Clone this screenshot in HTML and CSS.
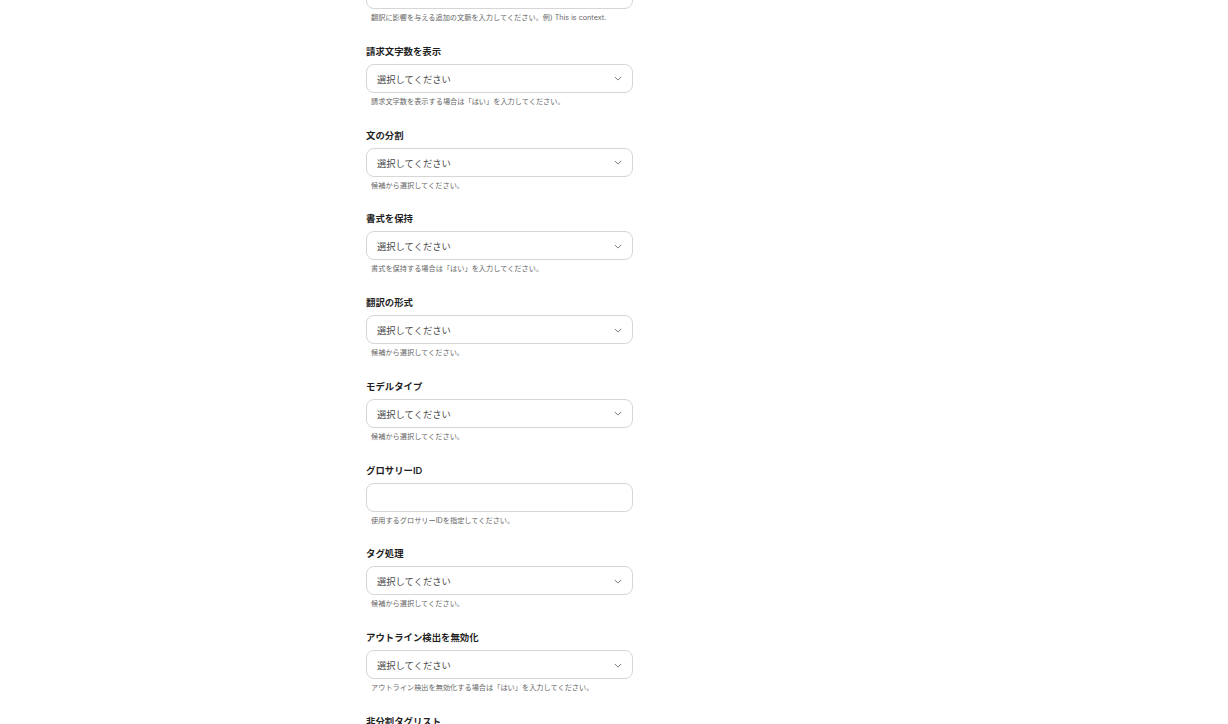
FILE: index.html
```html
<!DOCTYPE html>
<html lang="ja">
<head>
  <meta charset="UTF-8">
  <title>翻訳設定</title>
  <meta name="viewport" content="width=device-width, initial-scale=1.0">
  <link rel="stylesheet" href="styles.css">
</head>
<body>
  <form class="form">
    <div class="field">
      <label class="label">コンテキスト</label>
      <input class="input" type="text">
      <p class="help">翻訳に影響を与える追加の文脈を入力してください。例) This is context.</p>
    </div>

    <div class="field">
      <label class="label">請求文字数を表示</label>
      <div class="select"><span>選択してください</span><svg class="chev" viewBox="0 0 10 6"><path d="M1 1l4 4 4-4"/></svg></div>
      <p class="help">請求文字数を表示する場合は「はい」を入力してください。</p>
    </div>

    <div class="field">
      <label class="label">文の分割</label>
      <div class="select"><span>選択してください</span><svg class="chev" viewBox="0 0 10 6"><path d="M1 1l4 4 4-4"/></svg></div>
      <p class="help">候補から選択してください。</p>
    </div>

    <div class="field">
      <label class="label">書式を保持</label>
      <div class="select"><span>選択してください</span><svg class="chev" viewBox="0 0 10 6"><path d="M1 1l4 4 4-4"/></svg></div>
      <p class="help">書式を保持する場合は「はい」を入力してください。</p>
    </div>

    <div class="field">
      <label class="label">翻訳の形式</label>
      <div class="select"><span>選択してください</span><svg class="chev" viewBox="0 0 10 6"><path d="M1 1l4 4 4-4"/></svg></div>
      <p class="help">候補から選択してください。</p>
    </div>

    <div class="field">
      <label class="label">モデルタイプ</label>
      <div class="select"><span>選択してください</span><svg class="chev" viewBox="0 0 10 6"><path d="M1 1l4 4 4-4"/></svg></div>
      <p class="help">候補から選択してください。</p>
    </div>

    <div class="field">
      <label class="label">グロサリーID</label>
      <input class="input" type="text">
      <p class="help">使用するグロサリーIDを指定してください。</p>
    </div>

    <div class="field">
      <label class="label">タグ処理</label>
      <div class="select"><span>選択してください</span><svg class="chev" viewBox="0 0 10 6"><path d="M1 1l4 4 4-4"/></svg></div>
      <p class="help">候補から選択してください。</p>
    </div>

    <div class="field">
      <label class="label">アウトライン検出を無効化</label>
      <div class="select"><span>選択してください</span><svg class="chev" viewBox="0 0 10 6"><path d="M1 1l4 4 4-4"/></svg></div>
      <p class="help">アウトライン検出を無効化する場合は「はい」を入力してください。</p>
    </div>

    <div class="field">
      <label class="label">非分割タグリスト</label>
      <input class="input" type="text">
      <p class="help">分割しないタグをカンマ区切りで入力してください。</p>
    </div>
  </form>
</body>
</html>
```

FILE: styles.css
```css
body { margin: 0; background: #fff; font-family: Inter, "Noto Sans CJK JP", sans-serif; color: #1f1f1f; overflow: hidden; }
.form { width: 267px; margin: -39px 0 0 366px; }
.field { margin-bottom: 20.75px; }
.label { display: block; font-size: 9.4px; line-height: 14px; font-weight: 600; color: #1f1f1f; margin-bottom: 5px; }
.input, .select { box-sizing: border-box; width: 100%; height: 29px; border: 1px solid #d6d6d6; border-radius: 8px; background: #fff; }
.input { display: block; padding: 0 10px; font: inherit; outline: none; }
.select { display: flex; align-items: center; justify-content: space-between; padding: 1px 10px 0 10px; font-size: 9.3px; color: #4a4a4a; }
.chev { width: 8px; height: 5px; fill: none; stroke: #777; stroke-width: 1.2; }
.help { margin: 3px 0 0 5px; font-size: 7.2px; line-height: 12px; color: #666; }
```
